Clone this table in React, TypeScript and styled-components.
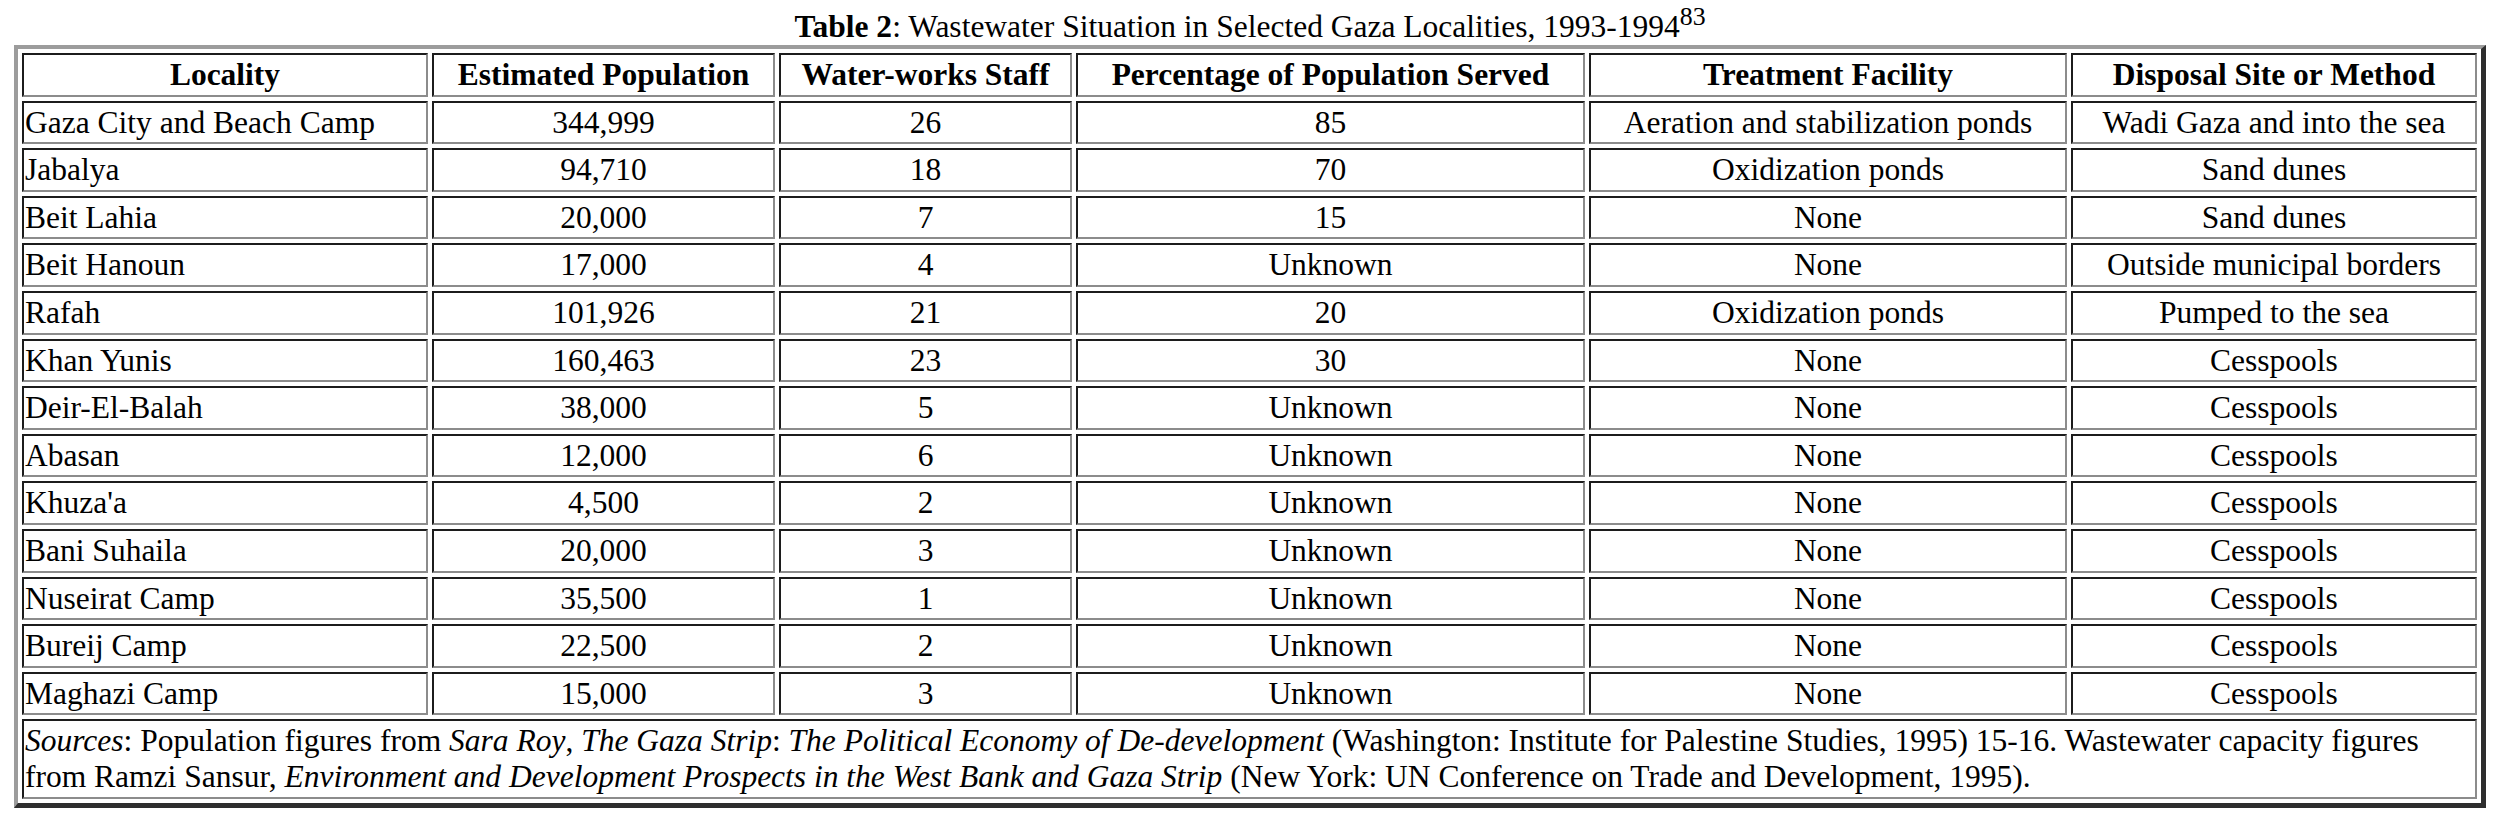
import React from "react";
import styled, { createGlobalStyle } from "styled-components";

const Global = createGlobalStyle`
  html, body { background: #ffffff; }
  body {
    margin: 8px;
    font-family: "Liberation Serif", "Times New Roman", Times, serif;
    font-size: 31.5px;
    color: #000000;
  }
`;

const Table = styled.table`
  width: 2472px;
  margin: 0 6px;
  table-layout: fixed;
  border-collapse: separate;
  border-spacing: 4px;
  border-style: solid;
  border-width: 4px 5px 5px 4px;
  border-color: #9c9c9c #2e2e2e #2e2e2e #9c9c9c;
`;

const Caption = styled.caption`
  caption-side: top;
  text-align: center;
  line-height: 37px;
  font-size: 31.5px;
`;

const Sup = styled.sup`
  font-size: 0.82em;
  line-height: 0;
  vertical-align: 0.48em;
`;

const cellBorder = `
  border-style: solid;
  border-width: 2px;
  border-color: #1c1c1c #8c8c8c #8c8c8c #1c1c1c;
  padding: 2px 1px;
  line-height: 35.6px;
  box-sizing: border-box;
  white-space: nowrap;
  overflow: hidden;
`;

const HeadCell = styled.th<{ $w: number }>`
  ${cellBorder}
  width: ${(p) => p.$w}px;
  font-weight: bold;
  text-align: center;
`;

const Cell = styled.td<{ $left?: boolean }>`
  ${cellBorder}
  font-weight: normal;
  text-align: ${(p) => (p.$left ? "left" : "center")};
`;

const SourcesCell = styled.td`
  ${cellBorder}
  white-space: normal;
  text-align: left;
`;

const columns: { label: string; w: number }[] = [
  { label: "Locality", w: 406 },
  { label: "Estimated Population", w: 343 },
  { label: "Water-works Staff", w: 293 },
  { label: "Percentage of Population Served", w: 509 },
  { label: "Treatment Facility", w: 478 },
  { label: "Disposal Site or Method", w: 406 },
];

const rows: string[][] = [
  ["Gaza City and Beach Camp", "344,999", "26", "85", "Aeration and stabilization ponds", "Wadi Gaza and into the sea"],
  ["Jabalya", "94,710", "18", "70", "Oxidization ponds", "Sand dunes"],
  ["Beit Lahia", "20,000", "7", "15", "None", "Sand dunes"],
  ["Beit Hanoun", "17,000", "4", "Unknown", "None", "Outside municipal borders"],
  ["Rafah", "101,926", "21", "20", "Oxidization ponds", "Pumped to the sea"],
  ["Khan Yunis", "160,463", "23", "30", "None", "Cesspools"],
  ["Deir-El-Balah", "38,000", "5", "Unknown", "None", "Cesspools"],
  ["Abasan", "12,000", "6", "Unknown", "None", "Cesspools"],
  ["Khuza'a", "4,500", "2", "Unknown", "None", "Cesspools"],
  ["Bani Suhaila", "20,000", "3", "Unknown", "None", "Cesspools"],
  ["Nuseirat Camp", "35,500", "1", "Unknown", "None", "Cesspools"],
  ["Bureij Camp", "22,500", "2", "Unknown", "None", "Cesspools"],
  ["Maghazi Camp", "15,000", "3", "Unknown", "None", "Cesspools"],
];

export default function App() {
  return (
    <>
      <Global />
      <Table>
        <Caption>
          <b>Table 2</b>: Wastewater Situation in Selected Gaza Localities, 1993-1994<Sup>83</Sup>
        </Caption>
        <thead>
          <tr>
            {columns.map((c) => (
              <HeadCell key={c.label} $w={c.w}>
                {c.label}
              </HeadCell>
            ))}
          </tr>
        </thead>
        <tbody>
          {rows.map((r) => (
            <tr key={r[0]}>
              {r.map((v, i) => (
                <Cell key={i} $left={i === 0}>
                  {v}
                </Cell>
              ))}
            </tr>
          ))}
          <tr>
            <SourcesCell colSpan={6}>
              <i>Sources</i>: Population figures from <i>Sara Roy</i>, <i>The Gaza Strip</i>:{" "}
              <i>The Political Economy of De-development</i> (Washington: Institute for Palestine
              Studies, 1995) 15-16. Wastewater capacity figures from Ramzi Sansur,{" "}
              <i>Environment and Development Prospects in the West Bank and Gaza Strip</i> (New
              York: UN Conference on Trade and Development, 1995).
            </SourcesCell>
          </tr>
        </tbody>
      </Table>
    </>
  );
}
